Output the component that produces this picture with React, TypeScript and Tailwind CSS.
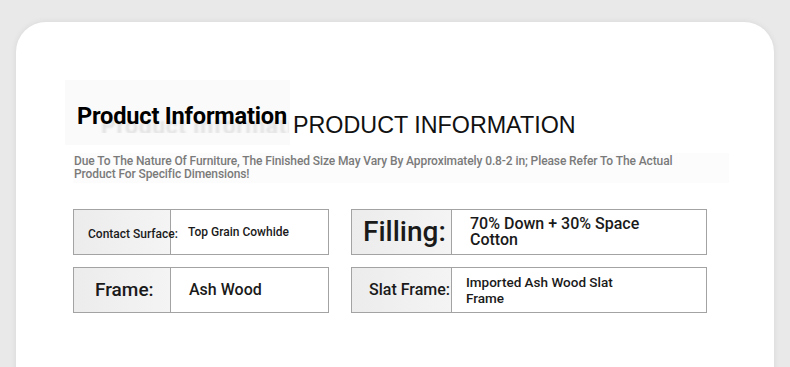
const specs = [
  {
    label: "Contact Surface:",
    labelClass: "text-[12px] pl-[14px] whitespace-nowrap",
    value: "Top Grain Cowhide",
    valueClass: "text-[12px] pl-[17px]",
  },
  {
    label: "Filling:",
    labelClass: "text-[28px] pl-[11px]",
    value: "70% Down + 30% Space Cotton",
    valueClass: "text-[16px] leading-[16px] pl-[18px] w-[200px]",
  },
  {
    label: "Frame:",
    labelClass: "text-[19px] pl-[21px]",
    value: "Ash Wood",
    valueClass: "text-[16px] pl-[18px]",
  },
  {
    label: "Slat Frame:",
    labelClass: "text-[16px] pl-[17px]",
    value: "Imported Ash Wood Slat Frame",
    valueClass: "text-[13.5px] leading-[16px] pl-[14px] w-[180px]",
  },
];

export default function App() {
  return (
    <div className="w-[790px] h-[367px] overflow-hidden bg-[#e9e9e9] pt-[22px] px-[16px] font-['Roboto',sans-serif]">
      <div className="h-[400px] bg-white rounded-[30px] shadow-[0_0_6px_rgba(0,0,0,0.08)] pt-[58px] pl-[57px]">
        {/* heading */}
        <div className="flex items-end h-[65px] w-[640px]">
          <div className="relative w-[225px] h-[65px] -ml-[8px] bg-[#fafafa] pl-[12px] pt-[22px]">
            <div className="absolute left-[36px] top-[40px] w-[188px] h-[13px] overflow-hidden">
              <span className="block -mt-[10px] text-[23px] font-bold text-[#e2e2e2] tracking-[0.6px] whitespace-nowrap blur-[0.8px]">
                Product Information
              </span>
            </div>
            <h1 className="relative text-[23.6px] leading-[28px] font-bold text-black tracking-[-0.2px] whitespace-nowrap">
              Product Information
            </h1>
          </div>
          <h2 className="ml-[3px] mb-[7px] text-[23.3px] leading-[26px] text-[#111] font-['Liberation_Sans',sans-serif] whitespace-nowrap">
            PRODUCT INFORMATION
          </h2>
        </div>

        <p className="mt-[8px] w-[656px] bg-[#fcfcfc] pl-[1px] py-[2px] text-[12px] leading-[13px] font-medium text-[#7a7a7a] tracking-[-0.1px]">
          Due To The Nature Of Furniture, The Finished Size May Vary By Approximately 0.8-2 in; Please Refer To The Actual
          <br />
          Product For Specific Dimensions!
        </p>

        {/* spec table */}
        <div className="mt-[26px] grid grid-cols-[256px_356px] gap-x-[22px] gap-y-[12px]">
          {specs.map((s, i) => (
            <div key={i} className="flex h-[46px] border border-[#a3a3a3] bg-white">
              <div
                className={`${i % 2 === 0 ? "w-[97px]" : "w-[100px]"} shrink-0 flex items-center bg-gradient-to-r from-[#ececec] to-[#f4f4f4] border-r border-[#a3a3a3] text-[#1a1a1a] font-medium ${s.labelClass}`}
              >
                <span className={i === 0 ? "relative top-[2px]" : ""}>{s.label}</span>
              </div>
              <div className="flex items-center">
                <span className={`block font-medium text-[#1a1a1a] ${s.valueClass}`}>{s.value}</span>
              </div>
            </div>
          ))}
        </div>
      </div>
    </div>
  );
}
